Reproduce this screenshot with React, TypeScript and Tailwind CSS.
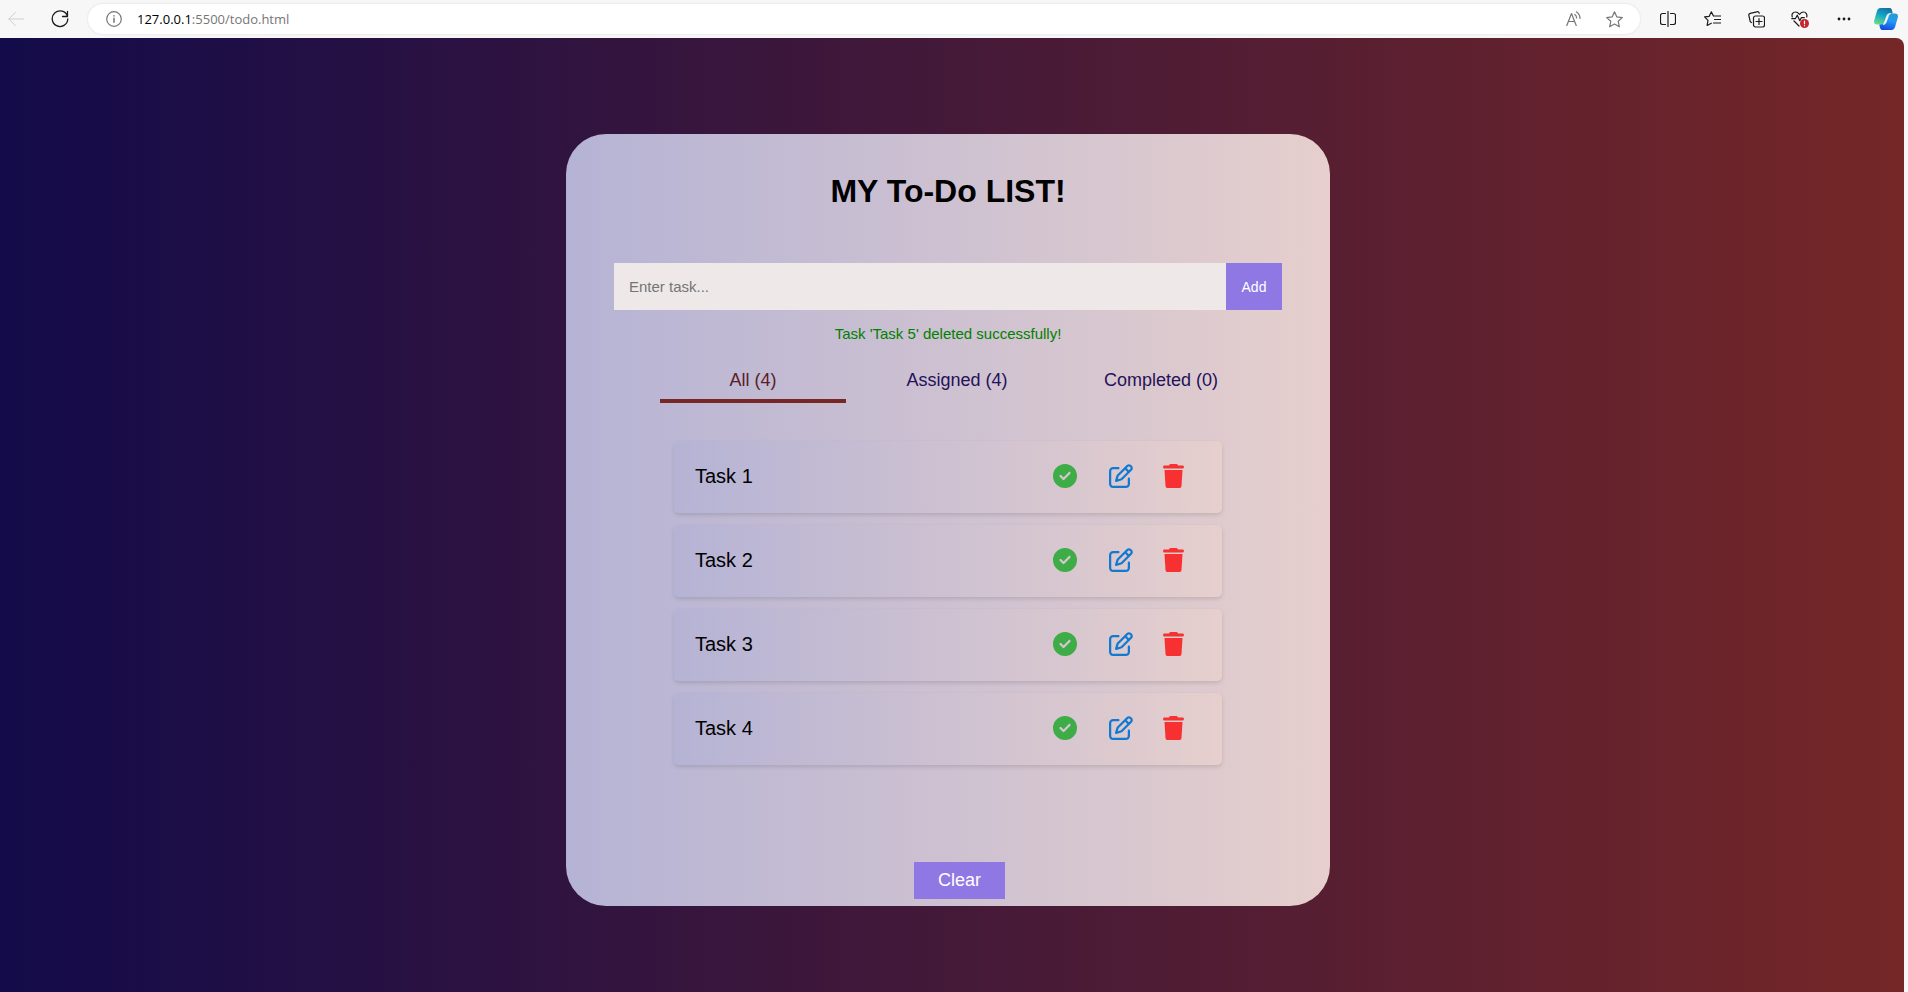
import { useState } from "react";
import type { ReactNode } from "react";
import { FaCircleCheck, FaRegPenToSquare, FaTrash } from "react-icons/fa6";

function ToolButton({ label, width, children }: { label: string; width: string; children: ReactNode }) {
  return (
    <button type="button" aria-label={label} className={`flex h-7 items-center justify-center ${width}`}>
      {children}
    </button>
  );
}

const line = { fill: "none", stroke: "currentColor", strokeLinecap: "round", strokeLinejoin: "round" } as const;
const STAR = "M8 .8l2.200 4.800 5.200.6-3.900 3.500 1.100 5.200L8 12.300l-4.600 2.600 1.100-5.200L.6 6.200l5.200-.6z";

function BrowserBar() {
  return (
    <header className="flex h-[38px] items-center bg-[#f7f7f7] text-[#1b1b1b]">
      <ToolButton label="Back" width="w-8">
        <svg width="16" height="16" viewBox="0 0 16 16" className="text-[#cfcfcf]" {...line}>
          <path d="M15.500 8H.8M7.500 1.200.8 8l6.700 6.800" />
        </svg>
      </ToolButton>
      <ToolButton label="Refresh" width="ml-3 w-8">
        <svg width="18" height="18" viewBox="0 0 18 18" {...line} strokeWidth="1.3">
          <path d="M16.500 6.500A7.800 7.800 0 1 0 16.800 9M16.500 1.500v5h-5" />
        </svg>
      </ToolButton>
      <div className="ml-3 flex h-[30px] flex-1 items-center rounded-full bg-white pr-1.5 pl-[18px] text-[#767676] shadow-[0_0_3px_rgba(0,0,0,0.1)]">
        <svg width="16" height="16" viewBox="0 0 16 16" {...line} strokeWidth="1.2">
          <circle cx="8" cy="8" r="7.300" />
          <path d="M8 7.300v4M8 4.700v.2" strokeWidth="1.500" />
        </svg>
        <span className="ml-[15px] flex-1 font-['Open_Sans','Noto_Sans',sans-serif] text-[13px] leading-4">
          <span className="text-black">127.0.0.1</span>:5500/todo.html
        </span>
        <ToolButton label="Read aloud" width="w-10">
          <svg width="16" height="16" viewBox="0 0 16 16" {...line} strokeWidth="1.2">
            <path d="M.8 14.500 5.500 2.500l4.700 12M2.500 10.500h6M8.800 3.500c1.200.8 1.800 2 1.800 3.500M10.500 1c2.200 1.300 3.500 3.500 3.500 6.500" />
          </svg>
        </ToolButton>
        <ToolButton label="Add to favourites" width="w-10">
          <svg width="17" height="17" viewBox="0 0 16 16" {...line} strokeWidth="1.1">
            <path d={STAR} />
          </svg>
        </ToolButton>
      </div>
      <div className="flex items-center pr-0.5 pl-[6px]">
        <ToolButton label="Split screen" width="w-11">
          <svg width="16" height="16" viewBox="0 0 16 16" {...line} strokeWidth="1.2">
            <path d="M8 .5v15M5.500 2.500H2.500a2 2 0 0 0-2 2v7a2 2 0 0 0 2 2h3M10.500 2.500h3a2 2 0 0 1 2 2v7a2 2 0 0 1-2 2h-3" />
          </svg>
        </ToolButton>
        <ToolButton label="Favourites" width="w-11">
          <svg width="17" height="16" viewBox="0 0 17 16" {...line} strokeWidth="1.2">
            <path d="M9.500 5 7.300.9 5.200 5.300.6 5.900 4 9.300l-.9 5.200 4.200-2.300M9.500 5h7M10.500 8.500h6M9.500 12h7" />
          </svg>
        </ToolButton>
        <ToolButton label="Collections" width="w-11">
          <svg width="17" height="17" viewBox="0 0 17 17" {...line} strokeWidth="1.2">
            <rect x="5.500" y="5" width="11" height="11" rx="2" />
            <path d="M11 7.500v6M8 10.500h6M3.500 11.500 2.300 10.800.9 4.600C.6 3.300 1 2.600 2.200 2.300L8.800.8c1.200-.3 2 .1 2.500 1.400" />
          </svg>
        </ToolButton>
        <ToolButton label="Browser essentials" width="w-11">
          <svg width="18" height="17" viewBox="0 0 18 17" {...line} strokeWidth="1.2">
            <path d="M1.300 6C.3 3 2 1 4.500 1 6.500 1 7.800 2.500 8.500 3.300 9.200 2.500 10.500 1 12.500 1c2.500 0 4 2.500 3.200 5M.8 7.700h3.500l2-3.500 2.500 5.500 1.500-3h3M3 10l5 5" />
            <circle cx="13.500" cy="12.500" r="4.500" fill="#c4262e" stroke="none" />
            <path d="M13.500 10v2.800M13.500 14.600v.1" stroke="#fff" />
          </svg>
        </ToolButton>
        <ToolButton label="Settings and more" width="w-11">
          <svg width="14" height="4" viewBox="0 0 14 4" fill="currentColor">
            <circle cx="2" cy="2" r="1.400" />
            <circle cx="7" cy="2" r="1.400" />
            <circle cx="12" cy="2" r="1.400" />
          </svg>
        </ToolButton>
        <ToolButton label="Copilot" width="w-10">
          <svg width="24" height="22" viewBox="0 0 24 22">
            <defs>
              <linearGradient id="copilot-left" x1="0.7" y1="0" x2="0.3" y2="1">
                <stop offset="0" stopColor="#176fa0" />
                <stop offset="0.45" stopColor="#12a2c8" />
                <stop offset="1" stopColor="#63dc8c" />
              </linearGradient>
              <linearGradient id="copilot-right" x1="0.6" y1="0" x2="0.3" y2="1">
                <stop offset="0" stopColor="#2a9ad0" />
                <stop offset="0.4" stopColor="#239bf5" />
                <stop offset="1" stopColor="#1348dd" />
              </linearGradient>
            </defs>
            <path d="M17.500 22h-9c-2 0-2.700-2-3.200-5.500L11 14l4-8.500h6c2.400 0 3.400 1.500 2.800 4l-2.600 9C20.500 20.800 19.500 22 17.500 22z" fill="url(#copilot-right)" />
            <path d="M6.500 0h9c2 0 2.600 1.500 3.200 5.500H16c-1.800 0-2.700.9-3.300 2.800L10.600 14c-.6 1.800-1.600 2.500-3.400 2.500H3C.6 16.500-.4 15 .2 12.500l2.600-9C3.500 1.200 4.500 0 6.500 0z" fill="url(#copilot-left)" />
            <path d="M16.800 5.500c-1.300.3-1.900 1.200-2.400 2.700l-2 5.500c-.7 1.900-1.600 2.800-3.400 2.800.9-.5 1.300-1.300 1.600-2.500l2.100-5.700c.6-1.900 1.500-2.800 4.100-2.800z" fill="#f7f7f7" stroke="#f7f7f7" strokeWidth="0.6" />
          </svg>
        </ToolButton>
      </div>
    </header>
  );
}

const tasks = ["Task 1", "Task 2", "Task 3", "Task 4"];
const tabs = ["All (4)", "Assigned (4)", "Completed (0)"];

export default function App() {
  const [active, setActive] = useState(0);
  return (
    <div className="flex min-h-screen flex-col bg-[#f7f7f7] font-['Liberation_Sans',Arial,sans-serif]">
      <BrowserBar />
      <main className="mr-1 flex flex-1 justify-center rounded-tr-lg bg-linear-to-r/srgb from-[#130b4a] to-[#752727] pt-24 pr-2 pb-[86px]">
        <section className="flex w-2/5 min-w-[764px] flex-col rounded-[40px] bg-linear-to-r/srgb from-[#b5b3d5] to-[#e6cfcd] px-12 pt-[37px] pb-[7px]">
          <h1 className="text-center text-[32px] leading-10 font-bold text-black">MY To-Do LIST!</h1>
          <form className="mt-[52px] flex h-[47px]" onSubmit={(e) => e.preventDefault()}>
            <input
              type="text"
              aria-label="New task"
              placeholder="Enter task..."
              className="min-w-0 flex-1 bg-[#eee8e8] px-[15px] pt-0.5 text-[15px] text-black outline-none placeholder:text-[#757575]"
            />
            <button type="submit" className="w-14 bg-[#8f77e4] text-sm text-white">Add</button>
          </form>
          <p className="mt-3 text-center text-[15px] leading-6 text-[#008000]">Task 'Task 5' deleted successfully!</p>
          <div role="tablist" className="mt-5 ml-[46px] mr-7 flex gap-[18px]">
            {tabs.map((tab, i) => (
              <button
                key={tab}
                type="button"
                role="tab"
                aria-selected={i === active}
                onClick={() => setActive(i)}
                className={
                  i === active
                    ? "h-[37px] flex-1 border-b-4 border-[#782727] pb-2 text-lg text-[#5a2027]"
                    : "h-[37px] flex-1 border-b-4 border-transparent pb-2 text-lg text-[#24125a]"
                }
              >
                {tab}
              </button>
            ))}
          </div>
          <ul className="mt-[38px] flex flex-col gap-3 px-[60px]">
            {tasks.map((task) => (
              <li
                key={task}
                className="flex h-[72px] items-center rounded-[5px] bg-linear-to-r/srgb from-[#b5b3d5] to-[#e6cfcd] pr-[38px] pb-0.5 pl-[21px] shadow-[0_2px_4px_rgba(0,0,0,0.13)]"
              >
                <span className="flex-1 text-xl text-black">{task}</span>
                <span className="flex items-center text-2xl">
                  <button type="button" aria-label={`Complete ${task}`} className="mr-8 text-[#3eac47]">
                    <FaCircleCheck />
                  </button>
                  <button type="button" aria-label={`Edit ${task}`} className="mr-[30px] text-[#117ad0]">
                    <FaRegPenToSquare />
                  </button>
                  <button type="button" aria-label={`Delete ${task}`} className="text-[#f73131]">
                    <FaTrash className="w-[21px]" />
                  </button>
                </span>
              </li>
            ))}
          </ul>
          <button type="button" className="mt-[97px] ml-[23px] h-[37px] self-center bg-[#8f77e4] px-6 pb-0.5 text-lg leading-5 text-white">
            Clear
          </button>
        </section>
      </main>
    </div>
  );
}
